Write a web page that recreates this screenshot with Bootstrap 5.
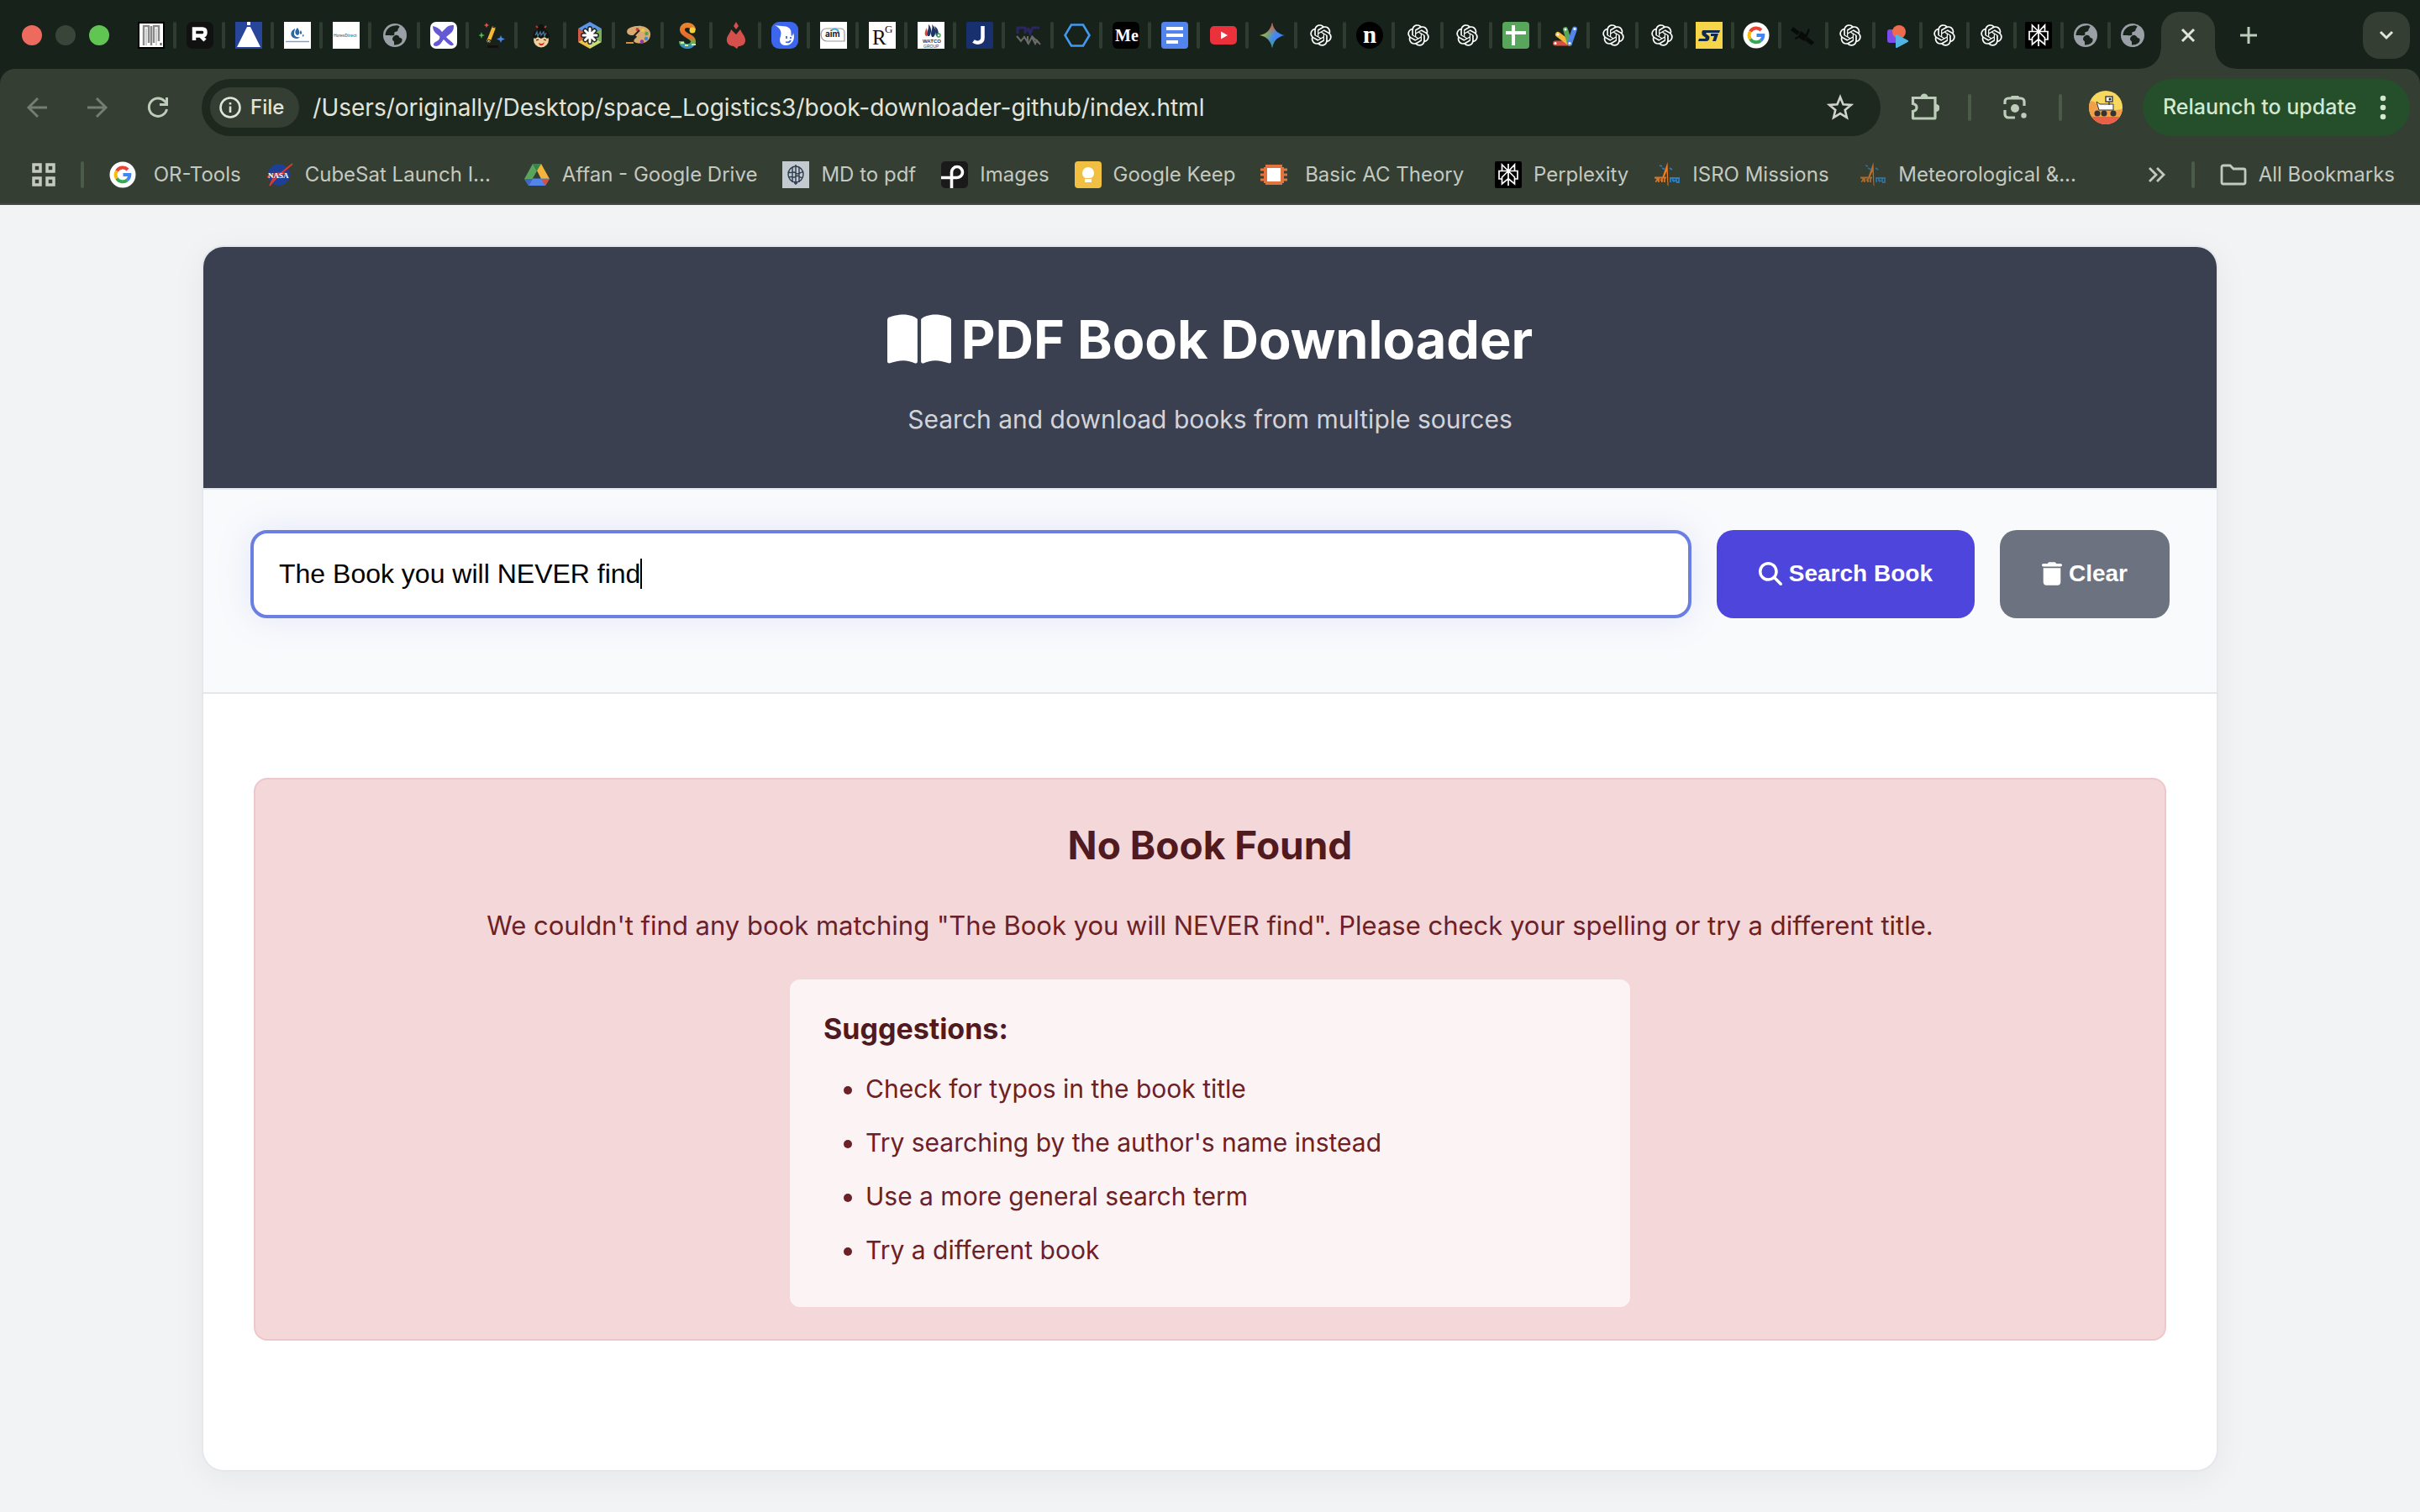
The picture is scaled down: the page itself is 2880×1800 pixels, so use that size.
<!DOCTYPE html>
<html lang="en">
<head>
<meta charset="utf-8">
<meta name="viewport" content="width=device-width, initial-scale=1">
<title>PDF Book Downloader</title>
<link rel="stylesheet" href="https://cdn.jsdelivr.net/npm/bootstrap@5.3.0/dist/css/bootstrap.min.css">
<style>
:root{--strip:#17231a;--bar:#343e33;--omni:#1d291e;--line:#4a5b4a;--ink:#e1e4dc;--soft:#c4c9c0;--leaf:#bccdb9}
body{background:#f2f3f5;font-family:Inter,"Liberation Sans",sans-serif;overflow-x:hidden}
svg{display:block;flex:none}
button{border:0;background:none;padding:0;color:inherit}
/* window chrome */
.strip{background:var(--strip);height:82px;padding:14px 12px 0 26px}
.strip-row{height:56px}
.lights{gap:16px;margin-right:34px}
.light{width:24px;height:24px;border-radius:50%}
.light.shut{background:#ed6a5e}
.light.hide{background:#3a453a}
.light.grow{background:#61c554}
.fav{display:flex;align-items:center;width:58px;height:32px}
.fav.tight{width:56px}
.fav svg{width:32px;height:32px}
.fav::after{content:"";width:4px;height:32px;margin-left:10px;border-radius:2px;background:#2f3c30}
.fav.end{width:32px}
.fav.end::after{display:none}
.current-tab{position:relative;width:64px;height:68px;margin-left:18px;background:var(--bar);border-radius:22px 22px 0 0;color:var(--ink);align-self:flex-start;padding-bottom:12px}
.current-tab::before,.current-tab::after{content:"";position:absolute;bottom:0;width:24px;height:24px}
.current-tab::before{right:100%;background:radial-gradient(circle at 0 0,transparent 23px,var(--bar) 24px)}
.current-tab::after{left:100%;background:radial-gradient(circle at 100% 0,transparent 23px,var(--bar) 24px)}
.new-tab{margin-left:28px;color:var(--leaf)}
.tab-menu{width:56px;height:56px;border-radius:20px;background:var(--bar);color:var(--ink)}
.corner-bg{background:var(--strip)}
.tools{background:var(--bar);border-radius:18px 18px 0 0;padding:12px 12px 0 20px;gap:28px;color:var(--leaf)}
.nav-set{gap:24px}
.user-set{gap:20px}
.ico{width:48px;height:48px;display:flex;align-items:center;justify-content:center}
.dim{color:#747d72}
.omni{background:var(--omni);height:68px;border-radius:34px;padding:0 24px 0 10px;gap:16px;min-width:0}
.chip{background:var(--bar);height:48px;border-radius:24px;padding:0 18px 0 11px;gap:11px;font-size:24px;font-weight:500;color:var(--ink)}
.url{background:none;border:0;outline:0;color:var(--ink);font-size:28px;padding:0;min-width:0}
.sep{width:4px;height:32px;border-radius:2px;background:var(--line)}
.relaunch{background:#254f2b;color:#d2e8d0;height:68px;border-radius:34px;padding:0 28px 0 24px;font-size:25px;font-weight:500;width:318px}
.marks{background:var(--bar);height:82px;border-bottom:2px solid #444746;padding:12px 30px 0 38px;font-size:24px;color:var(--soft)}
.marks .sep{margin:0 30px}
.marks a{color:inherit;text-decoration:none;display:flex;align-items:center;gap:14px;white-space:nowrap}
.marks-list{gap:30px}
.clipped span{width:230px}
/* page */
.page{padding:48px 240px}
.shell{background:#fff;border:2px solid #e5e7eb;border-radius:26px;overflow:hidden;box-shadow:0 8px 40px rgba(0,0,0,.05)}
.hero{background:#3b4050;color:#fff;border-bottom:2px solid #e5e7eb;padding:60px 60px 57px}
.hero h1{font-size:63px;font-weight:700;line-height:100px;gap:12px;margin:0 0 20px}
.hero p{font-size:30px;line-height:50px;margin:0;color:#d2d4d9}
.finder{background:#f9fafc;border-bottom:2px solid #e5e7eb;padding:48px 56px 88px;gap:30px;font-family:"Liberation Sans",Arial,sans-serif}
.finder input{border:4px solid #6b7fe3;border-radius:20px;padding:28px 30px;font-size:32px;line-height:41px;height:105px;color:#000;outline:0;background:#fff;box-shadow:0 0 40px rgba(102,126,234,.15);caret-color:transparent}
.caret{position:absolute;left:464px;top:34px;width:2px;height:36px;background:#000}
.act{color:#fff;font-size:28px;font-weight:700;line-height:41px;padding:31px 50px 33px;border-radius:20px;gap:8px}
.go{background:#4e45dc}
.wipe{background:#6c727f}
.results{padding:100px 60px 154px}
.miss{background:#f3d7d9;border:2px solid #efc7cb;border-radius:16px;color:#6b2126;padding:38px;font-size:30px}
.miss h2{font-size:46px;font-weight:700;line-height:80px;margin:0 0 32px;color:#501a1e}
.miss p{font-size:31px;line-height:48px;margin:0 0 40px}
.tips{background:#fcf3f4;border-radius:12px;max-width:1000px;padding:32px 40px 30px}
.tips h3{font-size:34px;font-weight:700;line-height:54px;margin:0 0 18px;color:#501a1e}
.tips ul{padding-left:50px;margin:0}
.tips li{line-height:52px;margin-bottom:12px}
</style>
</head>
<body>
<svg width="0" height="0" class="position-absolute" aria-hidden="true">
<defs>
<linearGradient id="gem" x1="0" y1="0.2" x2="1" y2="0.7"><stop offset="0" stop-color="#f5c332"/><stop offset=".35" stop-color="#7aa66e"/><stop offset=".6" stop-color="#4587f5"/><stop offset="1" stop-color="#3f7df0"/></linearGradient>
<linearGradient id="gemr" x1="0" y1="0" x2="0" y2="1"><stop offset="0" stop-color="#e84a3f"/><stop offset=".45" stop-color="#e84a3f" stop-opacity="0"/><stop offset=".65" stop-color="#37a853" stop-opacity="0"/><stop offset="1" stop-color="#37a853"/></linearGradient>
<linearGradient id="snake" x1="0" y1="0" x2="0" y2="1"><stop offset="0" stop-color="#e8842c"/><stop offset=".55" stop-color="#ea6a2a"/><stop offset=".8" stop-color="#6db04a"/><stop offset="1" stop-color="#2f8fc4"/></linearGradient>
<symbol id="gpt" viewBox="-3 -3 30 30"><path fill="#fff" d="M22.2819 9.8211a5.9847 5.9847 0 0 0-.5157-4.9108 6.0462 6.0462 0 0 0-6.5098-2.9A6.0651 6.0651 0 0 0 4.9807 4.1818a5.9847 5.9847 0 0 0-3.9977 2.9 6.0462 6.0462 0 0 0 .7427 7.0966 5.98 5.98 0 0 0 .511 4.9107 6.051 6.051 0 0 0 6.5146 2.9001A5.9847 5.9847 0 0 0 13.2599 24a6.0557 6.0557 0 0 0 5.7718-4.2058 5.9894 5.9894 0 0 0 3.9977-2.9001 6.0557 6.0557 0 0 0-.7475-7.0729zm-9.022 12.6081a4.4755 4.4755 0 0 1-2.8764-1.0408l.1419-.0804 4.7783-2.7582a.7948.7948 0 0 0 .3927-.6813v-6.7369l2.02 1.1686a.071.071 0 0 1 .038.052v5.5826a4.504 4.504 0 0 1-4.4945 4.4944zm-9.6607-4.1254a4.4708 4.4708 0 0 1-.5346-3.0137l.142.0852 4.783 2.7582a.7712.7712 0 0 0 .7806 0l5.8428-3.3685v2.3324a.0804.0804 0 0 1-.0332.0615L9.74 19.9502a4.4992 4.4992 0 0 1-6.1408-1.6464zM2.3408 7.8956a4.485 4.485 0 0 1 2.3655-1.9728V11.6a.7664.7664 0 0 0 .3879.6765l5.8144 3.3543-2.0201 1.1685a.0757.0757 0 0 1-.071 0l-4.8303-2.7865A4.504 4.504 0 0 1 2.3408 7.872zm16.5963 3.8558L13.1038 8.364 15.1192 7.2a.0757.0757 0 0 1 .071 0l4.8303 2.7913a4.4944 4.4944 0 0 1-.6765 8.1042v-5.6772a.79.79 0 0 0-.407-.667zm2.0107-3.0231l-.142-.0852-4.7735-2.7818a.7759.7759 0 0 0-.7854 0L9.409 9.2297V6.8974a.0662.0662 0 0 1 .0284-.0615l4.8303-2.7866a4.4992 4.4992 0 0 1 6.6802 4.66zM8.3065 12.863l-2.02-1.1638a.0804.0804 0 0 1-.038-.0567V6.0742a4.4992 4.4992 0 0 1 7.3757-3.4537l-.142.0805L8.704 5.459a.7948.7948 0 0 0-.3927.6813zm1.0976-2.3654l2.602-1.4998 2.6069 1.4998v2.9994l-2.5974 1.4997-2.6067-1.4997Z"/></symbol>
<symbol id="globe" viewBox="0 0 32 32"><circle cx="16" cy="16" r="14" fill="#9aa0a6"/><path fill="#17231a" d="M16.500 4.500c2.500-.5 4.500.5 5 1-.5 2-2 2.500-2 4 0 2.500-3 2-4 3s1 3-1 3.500c-2 .5-4 0-10 0C4.800 9.500 9.500 4.800 16.500 4.500zM16.500 16c2.500-.5 4 .5 4.500 2 .5 1.500 3 1 3.500 2.500.4 1.500-.5 3.500-1 4-2 2-5 3.200-8.500 3v-3.500c0-1.500-2-1.500-2-3.500s1.500-3.800 3.500-4.500z"/></symbol>
<symbol id="goog" viewBox="0 0 32 32"><circle cx="16" cy="16" r="15.500" fill="#fff"/><g fill="none" stroke-width="4"><path stroke="#e94335" d="M9 11.500A8.300 8.300 0 0 1 22 10"/><path stroke="#fbbc05" d="M9 20.500a8.300 8.300 0 0 1 0-9"/><path stroke="#34a853" d="M21.500 22.200A8.300 8.300 0 0 1 9 20.500"/><path stroke="#4285f4" d="M16.500 16h7.800a8.300 8.300 0 0 1-2.800 6.200"/></g></symbol>
<symbol id="perp" viewBox="0 0 32 32"><rect width="32" height="32" rx="2" fill="#000"/><g fill="none" stroke="#fff" stroke-width="1.700"><path d="M16 3v26M8.500 4l7.500 7.500V12L23.500 4v7.500h-15zM8.500 11.500H5V21h3.500v6L16 20.500l7.500 6.500v-6H27v-9.500h-3.500M16 11.500L8.500 19v3M16 11.500l7.500 7.500v3"/></g></symbol>
<symbol id="isro" viewBox="0 0 32 32"><path fill="#ef7d22" d="M16.500 1l1 29-1-2-1-16-3.500 8h-2z"/><path stroke="#2f7fc0" stroke-width="1.600" d="M7 5l3 1M10 8l4 2M19 8l3 2"/><path stroke="#d8772a" stroke-width="1.800" fill="none" d="M1 19.500h14M3 20c3 2 0 4-1 4M6 20v5M8 22l3 2M10 20v5M13 20v5"/><path stroke="#2f7fc0" stroke-width="1.800" fill="none" d="M19 20h12M20 20v5M23 20c-1 4 2 5 2 2M27 20v5M30 21v4h-3"/></symbol>
</defs>
</svg>

<header>
<div class="strip">
<div class="strip-row d-flex align-items-center">
<div class="lights d-flex"><span class="light shut"></span><span class="light hide"></span><span class="light grow"></span></div>
<button class="fav" aria-label="Tab 1"><svg viewBox="0 0 32 32"><rect width="32" height="32" fill="#000"/><rect x="2" y="2" width="28" height="28" fill="#fff"/><path d="M7 28V5h6v20M19 25V5h6v18M16 5v23" fill="none" stroke="#8a8a8a" stroke-width="2.400"/><path d="M10 28V8M22 28V8" stroke="#d0d0d0" stroke-width="2"/><path d="M27.500 25v3" stroke="#555" stroke-width="2"/></svg></button>
<button class="fav" aria-label="Tab 2"><svg viewBox="0 0 32 32"><rect width="32" height="32" rx="7" fill="#111"/><path d="M9 22V8.500h10q3.500 0 3.500 4t-3.500 4H9M17 17l5 5" fill="none" stroke="#fff" stroke-width="4.500"/></svg></button>
<button class="fav" aria-label="Tab 3"><svg viewBox="0 0 32 32"><rect width="32" height="32" fill="#26459b"/><path fill="#fff" d="M14 0h4v4h-4zM14 6h4l12 24H2z"/></svg></button>
<button class="fav" aria-label="Tab 4"><svg viewBox="0 0 32 32"><rect width="32" height="32" fill="#fff"/><path fill="#2c66a3" d="M13 8c-7 3-6 12 2 12 2 0 3-1 4-2-4 1-7-1-7-4s1-4 1-6zM16 7c-4 4-3 8 0 9 3-1 3-5 0-9zM20 10c-2 3-1 4 0 5 2-1 1-3 0-5zM22 15l2 1-2 2z"/><path d="M2 23.500h28" stroke="#7da3cc" stroke-width="1.500"/></svg></button>
<button class="fav" aria-label="Tab 5"><svg viewBox="0 0 32 32"><rect width="32" height="32" fill="#fff"/><text x="1" y="18" font-size="5" font-family="Liberation Sans, sans-serif" fill="#444">Hores<tspan fill="#1796c9" font-weight="700">Direct</tspan></text></svg></button>
<button class="fav" aria-label="Tab 6"><svg><use href="#globe"/></svg></button>
<button class="fav" aria-label="Tab 7"><svg viewBox="0 0 32 32"><rect width="32" height="32" rx="7" fill="#fff"/><path fill="#6459d3" d="M3 5c5 1 8 3 11 7l6-6c3-2 6-2 8-2 0 3 0 6-3 9l-6 5c3 4 7 5 9 9-3 3-6 0-12-6-3 3-3 7-9 8-4 0-4-3-1-5 5-2 6-5 5-7-4-3-8-6-8-12z"/></svg></button>
<button class="fav" aria-label="Tab 8"><svg viewBox="0 0 32 32"><path d="M18 6l-7 18" stroke="#f4b92e" stroke-width="4.500"/><path d="M16 6l6 2M9 26l2-5 3 1z" stroke="#222" fill="#f3e3c2"/><path d="M10 29.500h13" stroke="#111" stroke-width="3"/><path fill="#e2533f" d="M9 1l1 2 2 1-2 1-1 2-1-2-2-1 2-1z"/><path fill="#4dbb55" d="M3 12l1 3 3 1-3 1-1 3-1-3-3-1 3-1z"/><path fill="#4b84ee" d="M26 16l1.300 3 3.700 1.500-3.700 1.500L26 25l-1.300-3-3.700-1.500 3.700-1.500z"/></svg></button>
<button class="fav" aria-label="Tab 9"><svg viewBox="0 0 32 32"><circle cx="16" cy="21.500" r="9" fill="#f2cf9b"/><path fill="#111" d="M6 18c0-6 4-9 10-9s10 3 10 9l-3 2-3-2-4 2-4-2-3 2z"/><path d="M16 9V3M12 5l2 4M20 5l-2 4" stroke="#111" stroke-width="4"/><path d="M9 16l2-4 1 5 3-5 1 4 3-4 1 5 2-4" fill="none" stroke="#3c7698" stroke-width="1.400"/><path d="M10 5l2 2M22 5l-2 2" stroke="#c5382f" stroke-width="2"/><path d="M10 22l3-1M19 21l3 1" stroke="#222" stroke-width="1.200"/><path d="M13 25c3 2 5 1 7-1-1 5-6 6-7 1z" fill="#d7271f"/></svg></button>
<button class="fav" aria-label="Tab 10"><svg viewBox="0 0 32 32"><path fill="#5a97e6" d="M16 0l14 8-14 8L2 8z"/><path fill="#cf5b45" d="M2 8l14 8L2 24z"/><path fill="#f0c04b" d="M2 24l14-8v16z"/><path fill="#c9dd7c" d="M16 16l14 8-14 8z"/><path fill="#77b255" d="M30 8v16l-14-8z"/><path stroke="#222" stroke-width="6" stroke-linecap="round" d="M16 8v16M8 16h16M10.500 10.500l11 11M21.500 10.500l-11 11"/><path stroke="#fff" stroke-width="3" stroke-linecap="round" d="M16 8v16M8 16h16M10.500 10.500l11 11M21.500 10.500l-11 11"/></svg></button>
<button class="fav" aria-label="Tab 11"><svg viewBox="0 0 32 32"><path fill="#d9aa71" d="M15 5c9-1 16 4 15 11-1 8-9 11-17 9-4-1-3-4 0-6 2-2 0-3-4-3-7 0-8-4-6-7 2-2 7-4 12-4z"/><circle cx="14.500" cy="9" r="2" fill="#d73a31"/><circle cx="21" cy="10" r="2" fill="#f1ce34"/><circle cx="25.500" cy="14" r="2.200" fill="#57a14c"/><circle cx="25" cy="20" r="2.200" fill="#3d86d8"/><circle cx="20" cy="23.500" r="2.200" fill="#8d3aa7"/><path d="M9 18l8-8" stroke="#222" stroke-width="2"/><path d="M1 25h9" stroke="#e08a32" stroke-width="2"/></svg></button>
<button class="fav" aria-label="Tab 12"><svg viewBox="0 0 32 32"><path d="M23 10C23 2 9 2 10 10c1 7 14 7 13 14-1 7-14 7-14-1" fill="none" stroke="url(#snake)" stroke-width="6"/><circle cx="22" cy="10" r="3.500" fill="#f2d33b"/><path d="M8 25h4M13 28h4M21 27h5" stroke="#d8e9a0" stroke-width="2"/></svg></button>
<button class="fav" aria-label="Tab 13"><svg viewBox="0 0 32 32"><path fill="#d5504c" d="M16 0l3 5-3 4-3-4zM10 9l6 6 5-6c2 5 6 8 6 13 0 5-4 7-8 7l-2 3-4-3c-5 0-9-4-8-9 1-5 4-6 5-11z"/></svg></button>
<button class="fav" aria-label="Tab 14"><svg viewBox="0 0 32 32"><rect width="32" height="32" rx="9" fill="#3c66ee"/><path fill="#fff" d="M4 4c7 2 16-1 19 6 1 3 0 5 1 7 2-1 2-4 2-4 3 7-1 15-9 15-7 0-8-6-6-11 1-4 1-9-7-13z"/><path d="M18 17v3M23 18v2M17 24c3 1 5 0 6-2" stroke="#3c66ee" stroke-width="1.800" fill="none"/></svg></button>
<button class="fav" aria-label="Tab 15"><svg viewBox="0 0 32 32"><rect width="32" height="32" fill="#fff"/><path d="M7 8h17q5 0 5 5v10H8c-9 0-9-15-1-15z" fill="none" stroke="#999" stroke-width="1.200"/><path d="M14 10c3-3 7-1 8 2" fill="none" stroke="#46a5e0" stroke-width="2"/><text x="6" y="18" font-size="10" font-weight="700" font-family="Inter, sans-serif" fill="#222">aim</text></svg></button>
<button class="fav" aria-label="Tab 16"><svg viewBox="0 0 32 32"><rect width="32" height="32" fill="#fff"/><text x="4" y="27" font-size="25" font-family="Liberation Serif, serif" fill="#111">R<tspan x="19" y="13" font-size="13">G</tspan></text></svg></button>
<button class="fav" aria-label="Tab 17"><svg viewBox="0 0 32 32"><rect width="32" height="32" fill="#fff"/><path d="M12 17c-3-4 2-7 1-14 4 4 4 10 1 14zM17 18c-3-6 2-9 0-15 5 4 6 11 2 15zM22 17c-1-5 0-8-2-12 4 2 6 8 4 11z" fill="#1f3566"/><path d="M10 17c-3-3 0-6 0-10 2 3 2 7 1 10z" fill="#d8433a"/><circle cx="25" cy="16" r="2" fill="none" stroke="#3c9d4e" stroke-width="1.300"/><text x="6" y="25" font-size="6" font-weight="700" font-family="Liberation Sans, sans-serif" fill="#1f3566">WATCO<tspan x="7" y="31" font-weight="400" font-size="5">GROUP</tspan></text></svg></button>
<button class="fav" aria-label="Tab 18"><svg viewBox="0 0 32 32"><rect width="32" height="32" rx="2" fill="#19306f"/><path d="M19.500 5v14c0 6-7 7-11 4" fill="none" stroke="#fff" stroke-width="4.500"/></svg></button>
<button class="fav" aria-label="Tab 19"><svg viewBox="0 0 32 32"><path d="M3 14V7h9v7M15 7l3 7 3-7h8M12 10h9" fill="none" stroke="#2b2560" stroke-width="3"/><path d="M2 17l5 6 4-5 5 8 4-8 4 8 2-4 4 5M15 17v9M20 17l8 8" fill="none" stroke="#6b6b6b" stroke-width="2"/></svg></button>
<button class="fav" aria-label="Tab 20"><svg viewBox="0 0 32 32"><path d="M9 3.500h14L30.500 16 23 28.500H9L1.500 16z" fill="none" stroke="#429af0" stroke-width="2.600"/></svg></button>
<button class="fav" aria-label="Tab 21"><svg viewBox="0 0 32 32"><rect width="32" height="32" rx="6" fill="#000"/><text x="3" y="23" font-size="20" font-weight="700" font-family="Liberation Serif, serif" fill="#fff">Me</text></svg></button>
<button class="fav" aria-label="Tab 22"><svg viewBox="0 0 32 32"><rect width="32" height="32" rx="4" fill="#5384ec"/><path d="M6 8h20M6 16h20M6 24h14" stroke="#fff" stroke-width="4"/></svg></button>
<button class="fav" aria-label="Tab 23"><svg viewBox="0 0 32 32"><rect y="5" width="32" height="22" rx="5" fill="#eb323c"/><path fill="#fff" d="M13 11.500l8 4.500-8 4.500z"/></svg></button>
<button class="fav" aria-label="Tab 24"><svg viewBox="0 0 32 32"><path fill="url(#gem)" d="M16 1c1.500 8 6.500 13.500 15 15-8.500 1.500-13.500 7-15 15C14.500 23 9.500 17.500 1 16 9.500 14.500 14.500 9 16 1z"/><path fill="url(#gemr)" d="M16 1c1.500 8 6.500 13.500 15 15-8.500 1.500-13.500 7-15 15C14.500 23 9.500 17.500 1 16 9.500 14.500 14.500 9 16 1z"/></svg></button>
<button class="fav" aria-label="Tab 25"><svg><use href="#gpt"/></svg></button>
<button class="fav" aria-label="Tab 26"><svg viewBox="0 0 32 32"><circle cx="16" cy="16" r="16" fill="#000"/><text x="8" y="25" font-size="29" font-weight="700" font-family="Liberation Serif, serif" fill="#fff">n</text></svg></button>
<button class="fav" aria-label="Tab 27"><svg><use href="#gpt"/></svg></button>
<button class="fav" aria-label="Tab 28"><svg><use href="#gpt"/></svg></button>
<button class="fav" aria-label="Tab 29"><svg viewBox="0 0 32 32"><rect width="32" height="32" rx="4" fill="#58a55c"/><path d="M4 13h24M13 4v24" stroke="#fff" stroke-width="4"/></svg></button>
<button class="fav" aria-label="Tab 30"><svg viewBox="0 0 32 32"><g stroke-width="6" stroke-linecap="round"><path d="M22 25.500H5" stroke="#d95040"/><path d="M22 25.500L8 15" stroke="#f2b93b"/><path d="M22 25.500L17 9" stroke="#58a55c"/><path d="M22 25.500L28 8.500" stroke="#5384ec"/></g><g fill="#fff"><circle cx="5" cy="25.500" r="1.500"/><circle cx="8" cy="15" r="1.500"/><circle cx="17" cy="9" r="1.500"/><circle cx="28" cy="8.500" r="1.500"/><circle cx="22" cy="25.500" r="1.500"/></g></svg></button>
<button class="fav" aria-label="Tab 31"><svg><use href="#gpt"/></svg></button>
<button class="fav tight" aria-label="Tab 32"><svg><use href="#gpt"/></svg></button>
<button class="fav tight" aria-label="Tab 33"><svg viewBox="0 0 32 32"><rect width="32" height="32" fill="#f7d548"/><path fill="#10284b" d="M9 10h20l-1 3H13l-1 1 4 3c1 2 0 6-3 6H3l1-3h7l1-1-4-3c-1-2-1-6 1-6zM18 14h9l-3 9h-4l2-6h-4z"/></svg></button>
<button class="fav tight" aria-label="Tab 34"><svg><use href="#goog"/></svg></button>
<button class="fav tight" aria-label="Tab 35"><svg viewBox="0 0 32 32"><g fill="#080c09"><path d="M4 6l8 6-3 4-8-6zM21 18l8 6-3 4-8-6z"/><path d="M13 11l6 4 3-7 2 1-3 8-4 6-6-4-5 2v-2l4-2z"/></g></svg></button>
<button class="fav tight" aria-label="Tab 36"><svg><use href="#gpt"/></svg></button>
<button class="fav tight" aria-label="Tab 37"><svg viewBox="0 0 32 32"><rect x="4" y="9" width="15" height="16" rx="3" fill="#7c4bea"/><circle cx="18" cy="12" r="8" fill="#ee6c4d"/><path fill="#50b5e4" stroke="#50b5e4" stroke-width="2" stroke-linejoin="round" d="M15 16l13 7-13 7z"/></svg></button>
<button class="fav tight" aria-label="Tab 38"><svg><use href="#gpt"/></svg></button>
<button class="fav tight" aria-label="Tab 39"><svg><use href="#gpt"/></svg></button>
<button class="fav tight" aria-label="Tab 40"><svg><use href="#perp"/></svg></button>
<button class="fav tight" aria-label="Tab 41"><svg><use href="#globe"/></svg></button>
<button class="fav end" aria-label="Tab 42"><svg><use href="#globe"/></svg></button>
<button class="current-tab d-flex align-items-center justify-content-center" aria-label="Close tab"><svg width="20" height="20" viewBox="0 0 20 20"><path d="M3 3l14 14M17 3L3 17" stroke="currentColor" stroke-width="3"/></svg></button>
<button class="new-tab" aria-label="New tab"><svg width="24" height="24" viewBox="0 0 24 24"><path d="M12 2v20M2 12h20" stroke="currentColor" stroke-width="3"/></svg></button>
<button class="tab-menu ms-auto d-flex align-items-center justify-content-center" aria-label="Search tabs"><svg width="20" height="12" viewBox="0 0 20 12"><path d="M3 2l7 7 7-7" fill="none" stroke="currentColor" stroke-width="3"/></svg></button>
</div>
</div>

<div class="corner-bg">
<div class="tools d-flex align-items-center">
<div class="nav-set d-flex">
<button class="ico dim" aria-label="Back"><svg width="28" height="28" viewBox="0 0 28 28"><path d="M26 14H4M15 3L4 14l11 11" fill="none" stroke="currentColor" stroke-width="3"/></svg></button>
<button class="ico dim" aria-label="Forward"><svg width="28" height="28" viewBox="0 0 28 28"><path d="M2 14h22M13 3l11 11-11 11" fill="none" stroke="currentColor" stroke-width="3"/></svg></button>
<button class="ico" aria-label="Reload"><svg width="28" height="28" viewBox="0 0 28 28"><path d="M24.500 16A10.700 10.700 0 1 1 22 6.500l2 2" fill="none" stroke="currentColor" stroke-width="3"/><path d="M26 2v10H16V9h7V2z" fill="currentColor"/></svg></button>
</div>
<div class="omni d-flex align-items-center flex-grow-1">
<button class="chip d-flex align-items-center"><svg width="26" height="26" viewBox="0 0 26 26"><circle cx="13" cy="13" r="11.500" fill="none" stroke="currentColor" stroke-width="2.600"/><path d="M13 11.500V19M13 7v2.600" stroke="currentColor" stroke-width="2.600"/></svg>File</button>
<input class="url flex-grow-1" type="text" aria-label="Address" value="/Users/originally/Desktop/space_Logistics3/book-downloader-github/index.html">
<button class="ico" aria-label="Bookmark this page"><svg width="32" height="32" viewBox="0 0 32 32"><path d="M16 3.500l3.500 8.700 9.300.7-7.100 6 2.200 9.100-7.900-4.900L8.100 28l2.200-9.100-7.100-6 9.300-.7z" fill="none" stroke="#cfd3ca" stroke-width="2.600"/></svg></button>
</div>
<button class="ico" aria-label="Extensions"><svg width="36" height="36" viewBox="0 0 36 36"><path d="M4.500 6.500H31V30a1 1 0 0 1-1 1H5.500a1 1 0 0 1-1-1v-7.500c6-1 6-8 0-9z" fill="none" stroke="currentColor" stroke-width="3.200"/><path d="M13.500 6a4.500 4.500 0 0 1 9 0zM32 14a4.500 4.500 0 0 1 0 9z" fill="currentColor"/></svg></button>
<span class="sep"></span>
<button class="ico" aria-label="Search with Lens"><svg width="30" height="30" viewBox="0 0 30 30"><path d="M3 11V8a4 4 0 0 1 4-4h15a4 4 0 0 1 4 4v5M3 18v5a4 4 0 0 0 4 4h8" fill="none" stroke="currentColor" stroke-width="3.200"/><path d="M9 4l2-3h8l2 3z" fill="currentColor"/><circle cx="15" cy="16" r="5" fill="currentColor"/><circle cx="25.500" cy="24.500" r="3.200" fill="currentColor"/></svg></button>
<span class="sep"></span>
<div class="user-set d-flex align-items-center">
<button class="ico" aria-label="Profile"><svg width="40" height="40" viewBox="0 0 40 40"><clipPath id="disc"><circle cx="20" cy="20" r="20"/></clipPath><g clip-path="url(#disc)"><path fill="#f8d95d" d="M0 0h40v40H0z"/><path fill="#f0a04a" d="M0 13c6-3 8 3 14 6s20 6 26 2v12H0z"/><path fill="#ea5f48" d="M0 31h40v9H0z"/></g><path d="M9 13l4 3h16v7H12z" fill="#fff" stroke="#333"/><path d="M20 7h8v6h-8zM24 13v4" fill="#fff" stroke="#444" stroke-width="1.500"/><circle cx="25" cy="10" r="1.500" fill="#222"/><circle cx="10" cy="27" r="3.500" fill="#333"/><circle cx="18" cy="27" r="3.500" fill="#333"/><circle cx="29" cy="27" r="3.500" fill="#333"/></svg></button>
<button class="relaunch d-flex align-items-center justify-content-between"><span>Relaunch to update</span><svg width="8" height="32" viewBox="0 0 8 32"><g fill="currentColor"><circle cx="4" cy="5" r="3.300"/><circle cx="4" cy="16" r="3.300"/><circle cx="4" cy="27" r="3.300"/></g></svg></button>
</div>
</div>
</div>

<nav class="marks d-flex align-items-center" aria-label="Bookmarks">
<button aria-label="Apps"><svg width="28" height="28" viewBox="0 0 28 28"><path d="M2 2h8v8H2zM18 2h8v8h-8zM2 18h8v8H2zM18 18h8v8h-8z" fill="none" stroke="#c4c9c0" stroke-width="3.500"/></svg></button>
<span class="sep"></span>
<div class="marks-list d-flex">
<a href="#"><svg width="32" height="32"><use href="#goog"/></svg><span>&nbsp;OR-Tools</span></a>
<a href="#" class="clipped"><svg width="32" height="32" viewBox="0 0 32 32"><circle cx="15" cy="16" r="13" fill="#1d3f94"/><path d="M31 3C22 10 12 18 4 29c4-9 8-15 10-14s8-4 17-12zM1 19c8-5 16-6 24-4" fill="none" stroke="#e2382c" stroke-width="1.800"/><text x="2" y="20" font-size="9" font-weight="700" font-family="Liberation Serif, serif" fill="#fff">NASA</text></svg><span>CubeSat Launch I...</span></a>
<a href="#"><svg width="32" height="32" viewBox="0 0 32 32"><path fill="#318a45" d="M11 3h10l-5 8z"/><path fill="#f2b43c" d="M16 11l5-8 10 18H21z"/><path fill="#5aa55b" d="M11 3l5 8.500L6 29l-5-8z"/><path fill="#5384ec" d="M11 20.500h20L26 29H6z"/><path fill="#3e66c8" d="M1 21h10l-5 8z"/><path fill="#d6503f" d="M21 21h10l-5 8z"/></svg><span>Affan - Google Drive</span></a>
<a href="#"><svg width="32" height="32" viewBox="0 0 32 32"><rect width="32" height="32" fill="#c3cad0"/><g fill="none" stroke="#2d3b4e" stroke-width="1.400"><ellipse cx="16" cy="15.500" rx="9" ry="9.500"/><path d="M16 4v24M12 7v18M20 7v18M7 13c4 2 6-2 9 1s6-2 9-1M8 19c4-2 5 2 8-1s5 3 8 1M14 26h4"/></g></svg><span>MD to pdf</span></a>
<a href="#"><svg width="32" height="32" viewBox="0 0 32 32"><rect width="32" height="32" rx="5" fill="#1a1a1a"/><path d="M12.500 32V13a6.500 6.500 0 1 1 6.500 6.500H0" fill="none" stroke="#fff" stroke-width="3.600"/></svg><span>Images</span></a>
<a href="#"><svg width="32" height="32" viewBox="0 0 32 32"><rect width="32" height="32" rx="4" fill="#f1bf42"/><circle cx="16" cy="14" r="7" fill="#fff"/><path d="M12 21h8v4h-8z" fill="#fff"/><path d="M12 20.500h8" stroke="#f1bf42"/></svg><span>Google Keep</span></a>
<a href="#"><svg width="32" height="32" viewBox="0 0 32 32"><path fill="#e2733f" d="M6 4h20v3h2v19h-2v2H6v-2H4V7h2z"/><path d="M0 10h32M0 16h32M0 22h32" stroke="#e2733f" stroke-width="3"/><path fill="#fff" d="M8 8h16v16H8z"/></svg><span>&nbsp;Basic AC Theory&nbsp;</span></a>
<a href="#"><svg width="32" height="32"><use href="#perp"/></svg><span>Perplexity</span></a>
<a href="#"><svg width="32" height="32"><use href="#isro"/></svg><span>ISRO Missions&nbsp;</span></a>
<a href="#"><svg width="32" height="32" opacity=".75"><use href="#isro"/></svg><span>Meteorological &amp;...</span></a>
</div>
<button class="ms-auto" aria-label="More bookmarks"><svg width="22" height="20" viewBox="0 0 22 20"><path d="M2 2l8 8-8 8M11 2l8 8-8 8" fill="none" stroke="currentColor" stroke-width="2.800"/></svg></button>
<span class="sep"></span>
<a href="#"><svg width="32" height="26" viewBox="0 0 32 26"><path d="M2 22V4a2 2 0 0 1 2-2h8l4 4h12a2 2 0 0 1 2 2v14a2 2 0 0 1-2 2H4a2 2 0 0 1-2-2z" fill="none" stroke="currentColor" stroke-width="2.800"/></svg><span>All Bookmarks</span></a>
</nav>
</header>

<main class="page">
<div class="shell">
<section class="hero text-center">
<h1 class="d-flex align-items-center justify-content-center"><svg width="76" height="68" viewBox="0 0 576 512" fill="#fff"><path d="M249.600 471.500c10.800 3.800 22.400-4.100 22.400-15.500V78.600c0-4.200-1.600-8.400-5-11C247.400 52 202.400 32 144 32C93.500 32 46.300 45.300 18.100 56.100C6.800 60.500 0 71.700 0 83.800V454.100c0 11.900 12.800 20.200 24.100 16.500C55.600 460.100 105.500 448 144 448c33.900 0 79 14 105.600 23.500zm76.800 0C353 462 398.100 448 432 448c38.500 0 88.400 12.100 119.900 22.600c11.300 3.800 24.100-4.600 24.100-16.500V83.800c0-12.100-6.800-23.300-18.100-27.600C529.700 45.300 482.500 32 432 32c-58.400 0-103.400 20-123 35.600c-3.300 2.600-5 6.800-5 11V456c0 11.400 11.700 19.300 22.400 15.500z"/></svg>PDF Book Downloader</h1>
<p>Search and download books from multiple sources</p>
</section>
<form class="finder d-flex" onsubmit="return false">
<div class="position-relative flex-grow-1">
<input type="text" id="title" class="w-100" aria-label="Book title" value="The Book you will NEVER find" autofocus>
<span class="caret" aria-hidden="true"></span>
</div>
<button type="submit" class="act go d-flex align-items-center"><svg width="28" height="28" viewBox="0 0 512 512" fill="#fff"><path d="M416 208c0 45.900-14.900 88.300-40 122.700L502.600 457.400c12.500 12.500 12.500 32.800 0 45.300s-32.800 12.500-45.300 0L330.700 376c-34.400 25.200-76.800 40-122.700 40C93.100 416 0 322.900 0 208S93.100 0 208 0S416 93.100 416 208zM208 352a144 144 0 1 0 0-288 144 144 0 1 0 0 288z"/></svg>Search Book</button>
<button type="reset" class="act wipe d-flex align-items-center"><svg width="24" height="28" viewBox="0 0 448 512" fill="#fff"><path d="M135.200 17.700C140.600 6.800 151.700 0 163.800 0H284.200c12.100 0 23.200 6.800 28.600 17.700L320 32h96c17.700 0 32 14.300 32 32s-14.300 32-32 32H32C14.300 96 0 81.700 0 64S14.300 32 32 32h96l7.200-14.300zM32 128H416V448c0 35.300-28.700 64-64 64H96c-35.300 0-64-28.700-64-64V128z"/></svg>Clear</button>
</form>
<section class="results">
<div class="miss">
<h2 class="text-center">No Book Found</h2>
<p class="text-center">We couldn't find any book matching "The Book you will NEVER find". Please check your spelling or try a different title.</p>
<div class="tips mx-auto">
<h3>Suggestions:</h3>
<ul>
<li>Check for typos in the book title</li>
<li>Try searching by the author's name instead</li>
<li>Use a more general search term</li>
<li>Try a different book</li>
</ul>
</div>
</div>
</section>
</div>
</main>
<script src="https://cdn.jsdelivr.net/npm/bootstrap@5.3.0/dist/js/bootstrap.bundle.min.js"></script>
</body>
</html>
